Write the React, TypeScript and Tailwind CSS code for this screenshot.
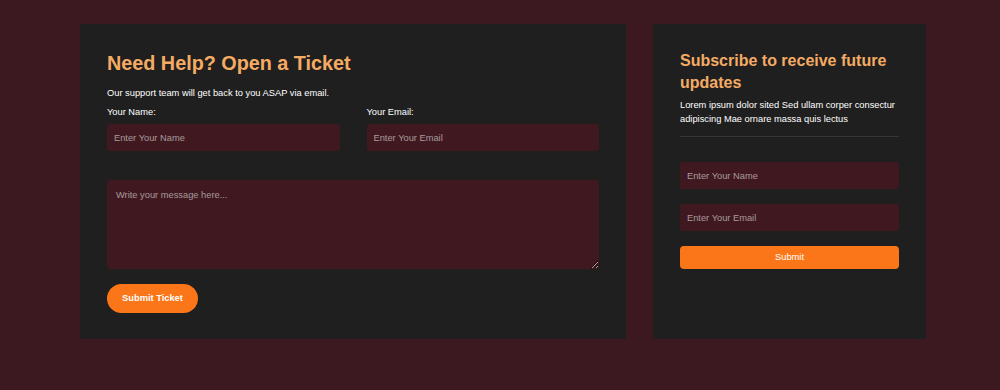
import React from 'react';

const inputCls =
  'h-[27px] w-full rounded-[3px] bg-[#401920] px-[7px] text-[9.3px] text-white outline-none placeholder:text-[#a8999c]';

function TicketForm() {
  return (
    <section className="flex w-[546px] flex-col bg-[#1f1f1f] px-[27px] pt-[28px] pb-[26px]">
      <h2 className="text-[19.8px] leading-[23px] font-bold text-[#f5ab63]">Need Help? Open a Ticket</h2>
      <p className="mt-[11px] text-[9.3px] leading-[14px] text-white">
        Our support team will get back to you ASAP via email.
      </p>
      <div className="mt-[5px] grid grid-cols-2 gap-x-[27px]">
        <label className="flex flex-col gap-[5px] text-[9.3px] leading-[14px] text-white">
          Your Name:
          <input type="text" placeholder="Enter Your Name" className={inputCls} />
        </label>
        <label className="flex flex-col gap-[5px] text-[9.3px] leading-[14px] text-white">
          Your Email:
          <input type="email" placeholder="Enter Your Email" className={inputCls} />
        </label>
      </div>
      <textarea
        placeholder="Write your message here..."
        className="mt-[29px] h-[89px] w-full rounded-[4px] bg-[#401920] px-[9px] py-[9px] text-[9.3px] text-white outline-none placeholder:text-[#a8999c]"
      />
      <button className="mt-[15px] h-[29px] w-[91px] rounded-full bg-[#fb7618] text-[9.3px] font-bold text-white">
        Submit Ticket
      </button>
    </section>
  );
}

function SubscribeCard() {
  return (
    <aside className="flex w-[273px] flex-col bg-[#1f1f1f] px-[27px] pt-[26px]">
      <h3 className="text-[16px] leading-[22px] font-bold text-[#f5ab63]">
        Subscribe to receive future updates
      </h3>
      <p className="mt-[4px] text-[9.3px] leading-[14px] text-white">
        Lorem ipsum dolor sited Sed ullam corper consectur adipiscing Mae ornare massa quis lectus
      </p>
      <hr className="mt-[10px] border-t border-[#363636]" />
      <div className="mt-[25px] flex flex-col gap-[15px]">
        <input type="text" placeholder="Enter Your Name" className={inputCls} />
        <input type="email" placeholder="Enter Your Email" className={inputCls} />
        <button className="h-[23px] w-full rounded-[4px] bg-[#fb7618] text-[9.3px] text-white">Submit</button>
      </div>
    </aside>
  );
}

export default function App() {
  return (
    <main className="flex h-[390px] w-[1000px] items-start gap-[27px] bg-[#3c1820] pt-[24px] pl-[80px] font-['Liberation_Sans',Arial,sans-serif]">
      <TicketForm />
      <div className="flex h-[315px]">
        <SubscribeCard />
      </div>
    </main>
  );
}
